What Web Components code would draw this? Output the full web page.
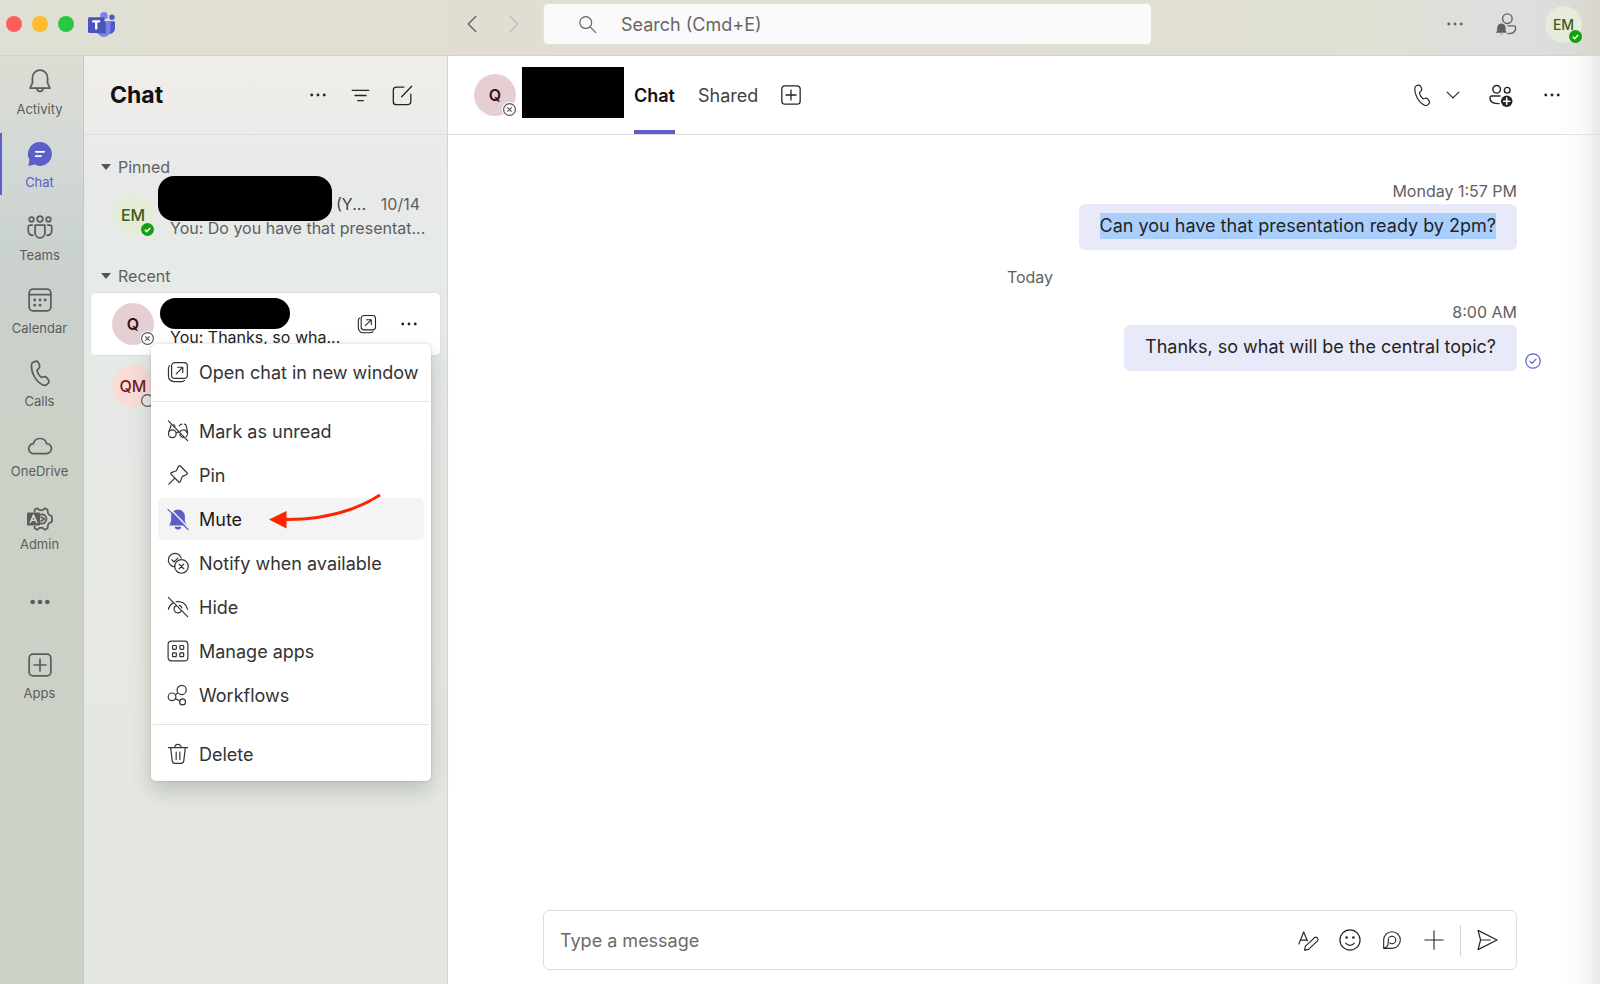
<!DOCTYPE html>
<html lang="en">
<head>
<meta charset="utf-8">
<title>Chat | Teams</title>
<style>
  html, body {
    height: 100%;
    margin: 0;
  }
  body {
    font-family: Inter, "Liberation Sans", sans-serif;
    font-size: 17px;
    color: #242424;
    overflow: hidden;
  }
</style>
</head>
<body>
<chat-app></chat-app>

<script>
(function() {
  const ICONS = {
    bell: '<path d="M12 2a7 7 0 0 0-7 7v5l-2.2 4.6h18.4L19 14V9a7 7 0 0 0-7-7z"/><path d="M9.2 18.8a2.8 2.8 0 0 0 5.6 0"/>',
    chatFilled: '<path d="M12 1a11 11 0 1 1-5 20.8L1.2 23l1.1-5.6A11 11 0 0 1 12 1z" fill="currentColor" stroke="none"/><path d="M8 10h8M8 14h5" stroke="#fff" stroke-width="1.5"/>',
    teams: '<circle cx="12" cy="4.6" r="2.6"/><circle cx="4.2" cy="5" r="2.1"/><circle cx="19.8" cy="5" r="2.1"/><path d="M7.5 10.2h9v7.3a4.5 4.5 0 0 1-9 0z"/><path d="M4.8 10.2H3a1.8 1.8 0 0 0-1.8 1.8v4a3.8 3.8 0 0 0 4.2 3.6M19.2 10.2H21a1.8 1.8 0 0 1 1.8 1.8v4a3.8 3.8 0 0 1-4.2 3.6"/>',
    calendar: '<rect x="2" y="2" width="20" height="20" rx="3.5"/><path d="M2 7h20"/><g fill="currentColor" stroke="none"><circle cx="7.2" cy="12" r="1.3"/><circle cx="12" cy="12" r="1.3"/><circle cx="16.8" cy="12" r="1.3"/><circle cx="7.2" cy="16.8" r="1.3"/><circle cx="12" cy="16.8" r="1.3"/></g>',
    phone: '<path d="M5.2 2.2 7 1.6c1.3-.4 2.3.1 2.8 1.3l1 2.4c.4 1 .1 2.1-.7 2.8L8.500 9.600c-.2.9.4 2.200 1.400 3.900 1 1.600 1.900 2.700 2.800 2.900l2.100-.6c1-.3 2 0 2.700.9l1.500 2.100c.8 1.100.6 2.100-.3 3l-1 1c-1 .9-2.500 1.200-3.800.6-3.300-1.500-5.800-4.200-7.900-7.800S3.100 8.900 3.300 5.200c0-1.400.7-2.500 1.900-3z" transform="translate(.8 -.3)"/>',
    cloud: '<path d="M6.400 19h11.400a4.600 4.600 0 0 0 .3-9.200A6.300 6.300 0 0 0 5.900 9.800 4.600 4.600 0 0 0 6.400 19z"/>',
    more: '<g fill="currentColor" stroke="none"><circle cx="4.500" cy="12" r="1.700"/><circle cx="12" cy="12" r="1.700"/><circle cx="19.500" cy="12" r="1.700"/></g>',
    moreLarge: '<g fill="currentColor" stroke="none"><circle cx="4" cy="12" r="2.500"/><circle cx="12" cy="12" r="2.500"/><circle cx="20" cy="12" r="2.500"/></g>',
    plusBox: '<rect x="2" y="2" width="20" height="20" rx="3.500"/><path d="M12 6.500v11M6.500 12h11"/>',
    filter: '<path d="M1.500 5.500h21M5 12h14M8.500 18.500h7"/>',
    compose: '<path d="M13.500 2.500H5A3.500 3.500 0 0 0 1.500 6v13A3.500 3.500 0 0 0 5 22.500h13a3.500 3.500 0 0 0 3.500-3.500v-8.500M11 13.500 22.500 1.500"/>',
    openWindow: '<rect x="5" y="1.800" width="17.200" height="17.200" rx="3.500"/><path d="M3 5a4 4 0 0 0-1.400 3v8.500a6 6 0 0 0 6 6H16a4 4 0 0 0 3-1.300M10 14l7-7M11.500 6.800H17.200v5.700"/>',
    unread: '<path d="M1.500 1 22.500 22.500"/><path d="M4.500 5.500 2 13M19 4.500c.8 0 1.500.5 1.800 1.300L22.600 14M13.500 6.500c.5-1.200 1.400-2 2.800-2M8.500 7.500a3 3 0 0 0-1-2.500"/><circle cx="5.800" cy="15" r="4.200"/><path d="M14.500 12.300A4.200 4.200 0 0 1 21 18.300M14 15.500a4.200 4.200 0 0 0 5 3.500M10 14c.8-.7 2-1 3-.6"/>',
    pin: '<path d="M14.500 2.200 21.800 9.500c.6.600.4 1.500-.4 1.900l-4.800 2.400-2 5.400c-.3.800-1.100 1-1.700.4L4.400 11.100c-.6-.6-.4-1.400.4-1.700l5.400-2 2.400-4.800c.4-.8 1.300-1 1.900-.4zM8.600 15.400 2 22"/>',
    mute: '<g stroke="none" fill="currentColor"><path d="M12 1.500A7.500 7.500 0 0 0 4.500 9v5L2.500 19h19l-2-5V9A7.500 7.500 0 0 0 12 1.500z"/><path d="M8.500 20.500h7a3.500 3 0 0 1-7 0z"/></g><path d="M2.500 0 24 22" stroke="#f4f4f4" stroke-width="1.600"/><path d="M1 1.500 23 23.500"/>',
    notify: '<path d="M8.600 16A7.200 7.200 0 1 1 15.500 6.500M5.200 8.500l2.400 2.400 4.200-4.300"/><circle cx="15.800" cy="15.800" r="7.400"/><path d="m13.300 13.300 5 5m0-5-5 5"/>',
    hide: '<path d="M1.500 1.500 22.500 22.500M1.500 14.500c.7-3 2.500-5.300 5-6.800M10 6.300c5.600-1.200 11.200 2 12.500 8.200M10 10.500a4.200 4.200 0 1 0 5.600 5.600M13.500 10.200a4.200 4.200 0 0 1 2.700 2.800"/>',
    apps: '<rect x="1.200" y="1.200" width="21.600" height="21.600" rx="3.500"/><rect x="6" y="6" width="4.200" height="4.200" rx=".8"/><rect x="14" y="6" width="4.200" height="4.200" rx=".8"/><rect x="6" y="14" width="4.200" height="4.200" rx=".8"/><rect x="14" y="14" width="4.200" height="4.200" rx=".8"/>',
    workflows: '<circle cx="16" cy="6.500" r="5"/><circle cx="5.500" cy="14" r="4.200"/><circle cx="17" cy="19.500" r="3.200"/><path d="m9.200 12 2.400-2.300M9.200 16.200l4.800 2"/>',
    trash: '<path d="M1.500 5h21M8.500 5a3.500 3.500 0 0 1 7 0M4 5l1.700 14.500a3 3 0 0 0 3 2.800h6.600a3 3 0 0 0 3-2.800L20 5M10 10v8M14 10v8"/>',
    back: '<path d="M17 2 7 12l10 10"/>',
    forward: '<path d="m7 2 10 10L7 22"/>',
    chevron: '<path d="m2 7 10 10L22 7"/>',
    search: '<circle cx="9.800" cy="9.500" r="7.500"/><path d="m15.300 15 7.200 7.200"/>',
    presence: '<circle cx="13.500" cy="6.200" r="5.200"/><path d="M14 14h6.500a2 2 0 0 1 2 2c0 4-3.300 6.500-8.500 6.500"/><path d="M7 11.500a4.600 4.600 0 0 0-4.600 4.600v3L1 21.500h12l-1.400-2.400v-3A4.600 4.600 0 0 0 7 11.500zM5.500 22.500h3l-1.500 1.300z" fill="currentColor" stroke="none"/>',
    addPeople: '<circle cx="8" cy="5.500" r="4"/><circle cx="19" cy="6.500" r="3"/><path d="M11.500 12.500H2.800a1.800 1.800 0 0 0-1.800 1.800c0 4 3 6.200 9.500 6.200"/><circle cx="18.500" cy="18" r="6" fill="#242424" stroke="none"/><path d="M18.500 14.800v6.400M15.300 18h6.400" stroke="#fff" stroke-width="1.700"/>',
    format: '<path d="M1 16 6.500 2.200 10.800 12.500M2.800 11.500h7"/><path d="m7.500 23 .9-4.200 10.200-9.900a2.600 2.600 0 0 1 3.700 3.600L12 22.200z"/>',
    emoji: '<circle cx="12" cy="12" r="11"/><path d="M7.300 15.500a6 6 0 0 0 9.400 0"/><circle cx="8.300" cy="9.300" r="1.400" fill="currentColor" stroke="none"/><circle cx="15.700" cy="9.300" r="1.400" fill="currentColor" stroke="none"/>',
    loop: '<path d="M2 22V12a10 10 0 1 1 10 10z"/><path d="M2.300 21.700C6 21 7.500 18 7.500 15v-3a4.500 4.500 0 1 1 4.500 4.500c-1.200 0-2-.4-2.600-1"/>',
    plus: '<path d="M12 1v22M1 12h22"/>',
    send: '<path d="M2.200 1.500 23 12 2.200 22.500 5 12zM5 12h10.500"/>',
    seen: '<circle cx="12" cy="12" r="10.800"/><path d="m7.500 12.500 3 3 6-6.300"/>',
    logo: '<g stroke="none"><circle cx="14.200" cy="4.200" r="3.400" fill="#7b83eb"/><circle cx="21.300" cy="5.500" r="2.400" fill="#5059c9"/><path d="M17 9h6.200c.5 0 .8.300.8.800v6a4.500 4.500 0 0 1-7 3.700z" fill="#5059c9"/><path d="M8 9h11.200c.5 0 .9.400.9.900v6.600a6 6 0 0 1-12.100 1z" fill="#7b83eb"/><path d="M8 9h7.800v10.800H8z" fill="#3c4299" opacity=".7"/><rect x="0" y="5.500" width="14.500" height="14" rx="1" fill="#4b53bc"/></g><path d="M3.800 9.300h7M7.300 9.300v7.200" stroke="#fff" stroke-width="2" stroke-linecap="butt"/>',
    admin: '<path d="M7 5V3.500L9.500 2l2 1.800h3L16.500 2 19 3.500l.3 2.800 1 1.700L23 9.500v5L20.300 16l-1 1.700-.3 2.800-2.500 1.500-2-1.800h-3l-2 1.800L7 20.500V19"/><path d="M12.500 8a4.200 4.200 0 1 1 0 8M13 10.200l3 1.800-3 1.800"/><rect x="0" y="6" width="12" height="12" rx="1" fill="currentColor" stroke="none"/><path d="m3 15.200 3-6.800 3 6.800M4.200 13.200h3.700" stroke="#d5d9cf" stroke-width="1.400"/>'
  };

  // <ui-icon name="bell" size="24" weight="1.5">
  class UiIcon extends HTMLElement {
    connectedCallback() {
      const size = this.getAttribute('size') || 20;
      const weight = this.getAttribute('weight') || 1.3;
      this.attachShadow({mode: 'open'}).innerHTML = `
<style>
  :host { display: inline-flex; flex: none; }
  svg { display: block; }
</style>
<svg width="${size}" height="${size}" viewBox="0 0 24 24" overflow="visible" fill="none" stroke="currentColor"
  stroke-width="${weight}" stroke-linecap="round" stroke-linejoin="round" aria-hidden="true">${ICONS[this.getAttribute('name')]}</svg>`;
    }
  }
  customElements.define('ui-icon', UiIcon);

  class IconButton extends HTMLElement {
    connectedCallback() {
      this.attachShadow({mode: 'open'}).innerHTML = `
<style>
  :host { display: inline-flex; flex: none; }
  button {
    display: flex;
    align-items: center;
    justify-content: center;
    width: var(--button-width, 42px);
    height: 36px;
    padding: 0;
    border: none;
    background: none;
    color: inherit;
  }
</style>
<button type="button" aria-label="${this.getAttribute('label')}">
  <ui-icon name="${this.getAttribute('icon')}" size="${this.getAttribute('size') || 20}" weight="${this.getAttribute('weight') || 1.3}"></ui-icon>
</button>`;
    }
  }
  customElements.define('icon-button', IconButton);

  class UserAvatar extends HTMLElement {
    connectedCallback() {
      this.attachShadow({mode: 'open'}).innerHTML = `
<style>
  :host {
    display: flex;
    flex: none;
    align-items: center;
    justify-content: center;
    position: relative;
    width: 42px;
    height: 42px;
    border-radius: 50%;
    font-size: 16px;
    font-weight: 600;
    background: #e6cfd2;
    color: #3f1011;
  }
  :host([tone="green"]) { background: #e5ecd9; color: #405a20; font-weight: 500; }
  :host([tone="peach"]) { background: #f9dcd6; color: #751d1f; font-weight: 500; }
  :host([small]) { width: 37px; height: 37px; font-size: 14px; }
  svg {
    position: absolute;
    right: 0;
    bottom: 0;
    overflow: visible;
  }
</style>
<slot></slot>
<svg width="13" height="13" viewBox="0 0 13 13" fill="none" aria-hidden="true">${this.badge}</svg>`;
    }
    get badge() {
      switch (this.getAttribute('status')) {
        case 'available':
          return '<circle cx="6.500" cy="6.500" r="6.500" fill="#13a10e"/><path d="m3.800 6.700 1.900 1.900 3.500-3.700" stroke="#fff" stroke-width="1.500"/>';
        case 'offline':
          return '<circle cx="6.500" cy="6.500" r="7.500" fill="#fff"/><circle cx="6.500" cy="6.500" r="5.900" stroke="#555" stroke-width="1.200"/><path d="m4.300 4.300 4.400 4.400m0-4.400L4.300 8.700" stroke="#555" stroke-width="1.200"/>';
        default:
          return '<circle cx="6.500" cy="6.500" r="5.900" fill="#e9ebe6" stroke="#555" stroke-width="1.200"/>';
      }
    }
  }
  customElements.define('user-avatar', UserAvatar);

  class TitleBar extends HTMLElement {
    connectedCallback() {
      this.attachShadow({mode: 'open'}).innerHTML = `
<style>
  :host {
    display: grid;
    grid-template-columns: 448px 95px minmax(0, 609px) 1fr;
    align-items: start;
    height: 55px;
    border-bottom: 1px solid #d6d3c8;
    background: linear-gradient(90deg, #dfdfd5 0%, #e1dfd4 10%, #e2ddd2 30%, #e1ded2 70%, #e0e0d5 86%, #dedfdd 93%, #dcdddc 97%, #d8d6ce 100%);
    color: #616161;
  }
  .window, .history, .tools {
    display: flex;
    align-items: center;
    height: 48px;
  }
  .window { gap: 10px; padding-left: 6px; }
  .light { width: 16px; height: 16px; border-radius: 50%; }
  .red { background: #ff5f57; }
  .yellow { background: #febc2e; }
  .green { background: #28c840; }
  .window ui-icon { padding-left: 4px; }
  .history { padding-left: 3px; }
  .history icon-button + icon-button { color: #c0bdb4; }
  .search {
    display: flex;
    align-items: center;
    gap: 24px;
    height: 40px;
    margin-top: 3px;
    padding: 0 34px;
    border: 1px solid #e4e2dc;
    border-radius: 5px;
    background: #fafafa;
  }
  input {
    flex: 1;
    min-width: 0;
    padding: 0;
    border: none;
    outline: none;
    background: none;
    font: inherit;
    font-size: 18px;
  }
  input::placeholder { color: #666; opacity: 1; }
  .tools { justify-content: flex-end; gap: 9px; padding-right: 18px; }
  .tools user-avatar { margin-left: 9px; }
</style>
<div class="window">
  <span class="light red"></span><span class="light yellow"></span><span class="light green"></span>
  <ui-icon name="logo" size="27"></ui-icon>
</div>
<div class="history">
  <icon-button icon="back" label="Back" size="18" weight="1.700"></icon-button>
  <icon-button icon="forward" label="Forward" size="18" weight="1.700"></icon-button>
</div>
<label class="search">
  <ui-icon name="search" size="19" weight="1.500"></ui-icon>
  <input type="text" aria-label="Search" placeholder="Search (Cmd+E)">
</label>
<div class="tools">
  <icon-button icon="more" label="Settings and more"></icon-button>
  <icon-button icon="presence" label="Notifications" size="22" weight="1.500"></icon-button>
  <user-avatar tone="green" status="available" small>EM</user-avatar>
</div>`;
    }
  }
  customElements.define('title-bar', TitleBar);

  class RailItem extends HTMLElement {
    connectedCallback() {
      const label = this.textContent;
      this.attachShadow({mode: 'open'}).innerHTML = `
<style>
  :host { display: block; color: #5c5c5c; }
  :host([active]) { color: #5b5fc7; }
  button {
    display: flex;
    flex-direction: column;
    align-items: center;
    gap: 6px;
    width: 100%;
    height: 62px;
    padding: 7px 6px 0 0;
    border: none;
    border-left: 2px solid transparent;
    background: none;
    color: inherit;
    font: inherit;
    font-size: 13px;
    line-height: 16px;
  }
  :host([active]) button { border-left-color: #5b5fc7; }
  :host([app]) button { gap: 3px; }
  :host([bare]) button { justify-content: center; padding-top: 0; }
  .icon {
    display: flex;
    align-items: center;
    justify-content: center;
    height: 28px;
  }
</style>
<button type="button" aria-label="${label || 'View more apps'}">
  <span class="icon"><ui-icon name="${this.getAttribute('icon')}" size="${this.getAttribute('size') || 26}" weight="1.600"></ui-icon></span>
  <slot></slot>
</button>`;
    }
  }
  customElements.define('rail-item', RailItem);

  class AppRail extends HTMLElement {
    connectedCallback() {
      this.attachShadow({mode: 'open'}).innerHTML = `
<style>
  :host {
    display: block;
    border-right: 1px solid #c3c9c1;
    background: linear-gradient(180deg, #dddcd4 0, #d3d9d6 100px, #cad2ce 190px, #cad1cb 280px, #cbd1c6 400px, #cbd1c6 100%);
  }
  nav {
    display: flex;
    flex-direction: column;
    gap: 11px;
    padding-top: 4px;
  }
</style>
<nav aria-label="Apps">
  <rail-item icon="bell">Activity</rail-item>
  <rail-item icon="chatFilled" active>Chat</rail-item>
  <rail-item icon="teams">Teams</rail-item>
  <rail-item icon="calendar">Calendar</rail-item>
  <rail-item icon="phone">Calls</rail-item>
  <rail-item icon="cloud" app>OneDrive</rail-item>
  <rail-item icon="admin" app>Admin</rail-item>
  <rail-item icon="moreLarge" size="22" bare></rail-item>
  <rail-item icon="plusBox">Apps</rail-item>
</nav>`;
    }
  }
  customElements.define('app-rail', AppRail);

  class MenuItem extends HTMLElement {
    connectedCallback() {
      this.attachShadow({mode: 'open'}).innerHTML = `
<style>
  :host { display: block; position: relative; }
  button {
    display: flex;
    align-items: center;
    gap: 10px;
    width: 100%;
    height: 42px;
    padding: 0 9px;
    border: none;
    border-radius: 5px;
    background: none;
    color: #333;
    font: inherit;
    font-size: 18px;
    white-space: nowrap;
  }
  :host([active]) button { background: #f4f4f4; color: #1a1a1a; }
  :host([active]) ui-icon { color: #5b5fc7; }
</style>
<button type="button" role="menuitem">
  <ui-icon name="${this.getAttribute('icon')}" size="22" weight="1.300"></ui-icon>
  <slot></slot>
</button>
<slot name="overlay"></slot>`;
    }
  }
  customElements.define('menu-item', MenuItem);

  class ContextMenu extends HTMLElement {
    connectedCallback() {
      this.attachShadow({mode: 'open'}).innerHTML = `
<style>
  :host {
    display: block;
    box-sizing: border-box;
    width: 280px;
    padding: 7px 7px 6px;
    border-radius: 5px;
    background: #fff;
    box-shadow: 0 10px 22px rgba(0,0,0,0.17), 0 0 3px rgba(0,0,0,0.16);
  }
  div { display: flex; flex-direction: column; gap: 2px; }
  hr {
    margin: 8px -5px;
    border: none;
    height: 1px;
    background: #e2e2e2;
  }
  /* hand-drawn pointer laid over the Mute row */
  svg {
    position: absolute;
    left: 110px;
    top: -6px;
    pointer-events: none;
  }
</style>
<div role="menu">
  <menu-item icon="openWindow">Open chat in new window</menu-item>
</div>
<hr>
<div role="menu">
  <menu-item icon="unread">Mark as unread</menu-item>
  <menu-item icon="pin">Pin</menu-item>
  <menu-item icon="mute" active>Mute
    <svg slot="overlay" width="116" height="40" viewBox="0 0 116 40" fill="none" aria-hidden="true">
      <path d="M18 27.500C52 27.500 84 21 112 3" stroke="#fe2400" stroke-width="3"/>
      <path d="M1 27.500 18.500 19v17.500z" fill="#fe2400"/>
    </svg>
  </menu-item>
  <menu-item icon="notify">Notify when available</menu-item>
  <menu-item icon="hide">Hide</menu-item>
  <menu-item icon="apps">Manage apps</menu-item>
  <menu-item icon="workflows">Workflows</menu-item>
</div>
<hr>
<div role="menu">
  <menu-item icon="trash">Delete</menu-item>
</div>`;
    }
  }
  customElements.define('context-menu', ContextMenu);

  class ChatRow extends HTMLElement {
    connectedCallback() {
      this.attachShadow({mode: 'open'}).innerHTML = `
<style>
  :host {
    display: flex;
    align-items: center;
    gap: 16px;
    position: relative;
    height: 62px;
    padding: 0 20px 0 21px;
    border-radius: 4px;
    color: #5e5e5e;
  }
  :host([selected]) {
    padding-right: 10px;
    background: #fff;
    box-shadow: 0 0 2px rgba(0,0,0,0.12);
    color: #242424;
  }
  .text {
    flex: 1;
    min-width: 0;
    font-size: 16px;
    line-height: 24px;
    white-space: nowrap;
    padding-top: 2px;
  }
  .name {
    display: flex;
    justify-content: space-between;
    position: relative;
    height: 24px;
  }
  .actions { display: none; }
  :host([selected]) .actions { display: flex; }
  ::slotted(context-menu) {
    position: absolute;
    left: 60px;
    top: 51px;
    z-index: 1;
  }
</style>
<slot name="avatar"></slot>
<div class="text">
  <div class="name"><slot name="name"></slot><slot name="date"></slot></div>
  <div><slot></slot></div>
</div>
<div class="actions"><slot name="actions"></slot></div>
<slot name="menu"></slot>`;
    }
  }
  customElements.define('chat-row', ChatRow);

  class ChatList extends HTMLElement {
    connectedCallback() {
      this.attachShadow({mode: 'open'}).innerHTML = `
<style>
  :host {
    display: block;
    min-width: 0;
    border-right: 1px solid #d3d5ce;
    background: linear-gradient(180deg, #efeeea 0, #ecebe9 77px, #e8eaea 120px, #e6eae8 220px, #e5e8e4 400px, #e7e8e2 560px, #e4e8e1 700px, #e4e8e1 100%);
  }
  header {
    display: flex;
    align-items: center;
    height: 79px;
    padding: 0 24px 0 26px;
    border-bottom: 1px solid #dcdcdb;
    box-sizing: border-box;
    color: #242424;
  }
  h1 { flex: 1; margin: 0; font-size: 23px; font-weight: 700; color: #111; }
  h2 {
    display: flex;
    align-items: center;
    gap: 7px;
    margin: 0;
    padding-left: 17px;
    height: 32px;
    font-size: 16px;
    font-weight: 400;
    color: #616161;
  }
  h2::before {
    content: "";
    border: 5px solid transparent;
    border-top: 6px solid #555;
    border-bottom: none;
  }
  section { padding-top: 16px; }
  section + section { padding-top: 14px; }
  chat-row { margin: 0 7px; }
  h2 + chat-row { margin-top: 1px; }
  .you { padding-left: 166px; color: #424242; }
  .cover {
    position: absolute;
    left: -12px;
    top: -16px;
    width: 174px;
    height: 45px;
    border-radius: 16px;
    background: #000;
  }
  .cover.short {
    left: -10px;
    top: -3px;
    width: 130px;
    height: 31px;
  }
</style>
<header>
  <h1>Chat</h1>
  <icon-button icon="more" label="More options"></icon-button>
  <icon-button icon="filter" label="Filter" size="19" weight="1.600"></icon-button>
  <icon-button icon="compose" label="New chat" size="21" weight="1.500"></icon-button>
</header>
<section>
  <h2>Pinned</h2>
  <chat-row>
    <user-avatar slot="avatar" tone="green" status="available">EM</user-avatar>
    <span slot="name" class="cover"></span>
    <span slot="name" class="you">(Y...</span>
    <span slot="date">10/14</span>
    You: Do you have that presentat...
  </chat-row>
</section>
<section>
  <h2>Recent</h2>
  <chat-row selected>
    <user-avatar slot="avatar" status="offline">Q</user-avatar>
    <span slot="name" class="cover short"></span>
    You: Thanks, so wha...
    <icon-button slot="actions" icon="openWindow" label="Open in new window"></icon-button>
    <icon-button slot="actions" icon="more" label="More chat options"></icon-button>
    <context-menu slot="menu"></context-menu>
  </chat-row>
  <chat-row>
    <user-avatar slot="avatar" tone="peach" status="unknown">QM</user-avatar>
  </chat-row>
</section>`;
    }
  }
  customElements.define('chat-list', ChatList);

  class ChatMessage extends HTMLElement {
    connectedCallback() {
      this.attachShadow({mode: 'open'}).innerHTML = `
<style>
  :host {
    display: flex;
    flex-direction: column;
    align-items: flex-end;
    gap: 3px;
    position: relative;
  }
  time { font-size: 16px; line-height: 20px; color: #616161; }
  p {
    margin: 0;
    padding: 9px 21px 11px;
    border-radius: 6px;
    background: #e8e9f9;
    font-size: 18px;
    line-height: 26px;
  }
  ui-icon {
    position: absolute;
    right: -24px;
    bottom: 2px;
    color: #5b5fc7;
  }
</style>
<time>${this.getAttribute('time')}</time>
<p><slot></slot></p>
${this.hasAttribute('sent') ? '<ui-icon name="seen" size="16" weight="1.800"></ui-icon>' : ''}`;
    }
  }
  customElements.define('chat-message', ChatMessage);

  class MessageComposer extends HTMLElement {
    connectedCallback() {
      this.attachShadow({mode: 'open'}).innerHTML = `
<style>
  :host {
    display: flex;
    align-items: center;
    height: 58px;
    padding-right: 8px;
    border: 1px solid #dedede;
    border-radius: 6px;
    background: #fff;
  }
  input {
    flex: 1;
    min-width: 0;
    padding: 0 16px;
    border: none;
    outline: none;
    background: none;
    font: inherit;
    font-size: 18px;
  }
  input::placeholder { color: #6b6b6b; opacity: 1; }
  .rule { width: 1px; height: 31px; margin: 0 5px; background: #d1d1d1; }
</style>
<input type="text" aria-label="Type a message" placeholder="Type a message">
<icon-button icon="format" label="Format" size="21"></icon-button>
<icon-button icon="emoji" label="Emoji" size="22"></icon-button>
<icon-button icon="loop" label="Loop components"></icon-button>
<icon-button icon="plus" label="Actions and apps"></icon-button>
<span class="rule"></span>
<icon-button icon="send" label="Send" size="22"></icon-button>`;
    }
  }
  customElements.define('message-composer', MessageComposer);

  class ChatPane extends HTMLElement {
    connectedCallback() {
      this.attachShadow({mode: 'open'}).innerHTML = `
<style>
  :host {
    display: flex;
    flex-direction: column;
    min-width: 0;
    background: linear-gradient(90deg, transparent calc(100% - 44px), rgba(0,0,0,0.02) calc(100% - 18px), rgba(0,0,0,0.09)) #fff;
  }
  header {
    display: flex;
    align-items: center;
    box-sizing: border-box;
    height: 79px;
    padding: 0 27px 0 26px;
    border-bottom: 1px solid #e0e0e0;
  }
  .redacted {
    width: 102px;
    height: 51px;
    margin: 0 10px 6px 6px;
    background: #000;
  }
  nav { display: flex; flex: 1; align-self: stretch; align-items: center; gap: 23px; }
  nav a {
    display: flex;
    align-items: center;
    box-sizing: border-box;
    height: 100%;
    padding-top: 4px;
    border-bottom: 4px solid transparent;
    color: #424242;
    font-size: 18px;
    text-decoration: none;
  }
  nav a.current { border-bottom-color: #5b5fc7; color: #111; font-weight: 600; }
  nav icon-button { --button-width: 20px; }
  .calls { display: flex; align-items: center; }
  .calls icon-button:nth-child(2) { --button-width: 20px; }
  .calls icon-button:nth-child(3) { margin: 0 10px 0 16px; }
  main {
    display: flex;
    flex: 1;
    flex-direction: column;
    padding: 46px 83px 0 95px;
  }
  .day {
    padding: 17px 0 15px;
    text-align: center;
    font-size: 16px;
    line-height: 20px;
    color: #616161;
  }
  mark { display: inline-block; background: #abcffc; color: inherit; }
  message-composer { margin: 0 83px 14px 95px; }
</style>
<header>
  <user-avatar status="offline">Q</user-avatar>
  <span class="redacted"></span>
  <nav aria-label="Chat tabs">
    <a class="current" href="#chat">Chat</a>
    <a href="#shared">Shared</a>
    <icon-button icon="plusBox" label="Add a tab" size="22" weight="1.400"></icon-button>
  </nav>
  <div class="calls">
    <icon-button icon="phone" label="Audio call" size="22"></icon-button>
    <icon-button icon="chevron" label="Call options" size="14" weight="2"></icon-button>
    <icon-button icon="addPeople" label="View and add participants" size="23" weight="1.500"></icon-button>
    <icon-button icon="more" label="More options"></icon-button>
  </div>
</header>
<main>
  <chat-message time="Monday 1:57 PM"><mark>Can you have that presentation ready by 2pm?</mark></chat-message>
  <div class="day">Today</div>
  <chat-message time="8:00 AM" sent>Thanks, so what will be the central topic?</chat-message>
</main>
<message-composer></message-composer>`;
    }
  }
  customElements.define('chat-pane', ChatPane);

  class ChatApp extends HTMLElement {
    connectedCallback() {
      this.attachShadow({mode: 'open'}).innerHTML = `
<style>
  :host {
    display: grid;
    grid-template: auto 1fr / 84px 364px minmax(0, 1fr);
    min-height: 100vh;
  }
  title-bar { grid-column: 1 / -1; }
</style>
<title-bar></title-bar>
<app-rail></app-rail>
<chat-list></chat-list>
<chat-pane></chat-pane>`;
    }
  }
  customElements.define('chat-app', ChatApp);
})();
</script>
</body>
</html>
